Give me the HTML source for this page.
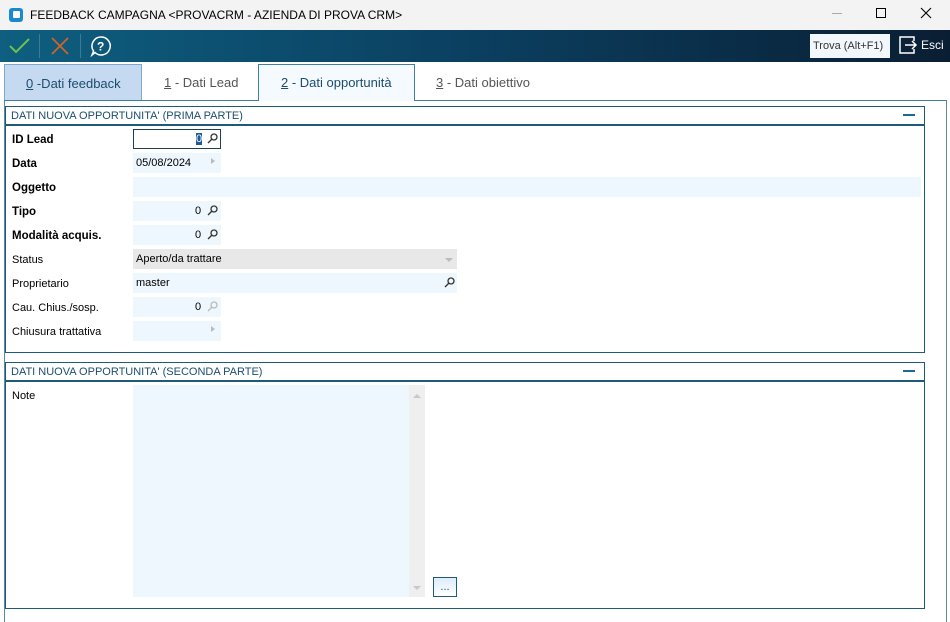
<!DOCTYPE html>
<html><head><meta charset="utf-8"><style>
*{margin:0;padding:0;box-sizing:border-box}
body{width:950px;height:622px;background:#fff;font-family:"Liberation Sans",sans-serif;font-size:12px;color:#000;position:relative;overflow:hidden}
.a{position:absolute}
.inp{position:absolute;background:#eef7fd;height:20px}
.lbl{position:absolute;left:12px;font-size:11px}
.b{font-weight:bold}
.num{position:absolute;font-size:11px}
</style></head><body>
<div class="a" style="left:0;top:0;width:950px;height:30px;background:#f3f3f3"></div>
<div class="a" style="left:9px;top:8px;width:14px;height:14px;background:#1a8ad0;border-radius:3px"></div>
<div class="a" style="left:13px;top:11px;width:7px;height:7px;background:#fff;border-radius:1px"></div>
<div class="a" style="left:30px;top:8px;font-size:12px">FEEDBACK CAMPAGNA &lt;PROVACRM - AZIENDA DI PROVA CRM&gt;</div>
<div class="a" style="left:832px;top:13px;width:10px;height:1px;background:#aaa"></div>
<div class="a" style="left:876px;top:8px;width:10px;height:10px;border:1px solid #000"></div>
<svg class="a" style="left:920px;top:7px" width="12" height="12"><path d="M1 1L11 11M11 1L1 11" stroke="#000" stroke-width="1.1"/></svg>
<div class="a" style="left:0;top:30px;width:950px;height:32px;background:linear-gradient(90deg,#0e5f80,#0b3f60 50%,#0a1e33)"></div>
<svg class="a" style="left:8px;top:36px" width="24" height="20"><path d="M2 10L8 16L21 3" stroke="#6cc24a" stroke-width="2" fill="none"/></svg>
<div class="a" style="left:39px;top:34px;width:1px;height:24px;background:#3d7a96"></div>
<svg class="a" style="left:50px;top:36px" width="20" height="20"><path d="M2 2L18 18M18 2L2 18" stroke="#d0622a" stroke-width="1.8"/></svg>
<div class="a" style="left:80px;top:34px;width:1px;height:24px;background:#3d7a96"></div>
<svg class="a" style="left:90px;top:35px" width="22" height="22"><path d="M11 2a9 9 0 1 1-6 15.5L2 20l1.5-4A9 9 0 0 1 11 2z" stroke="#fff" stroke-width="1.5" fill="none"/><text x="7" y="15.5" fill="#fff" font-size="12" font-weight="bold" font-family="Liberation Sans">?</text></svg>
<div class="a" style="left:810px;top:34px;width:80px;height:24px;background:#f2f7fb;font-size:11px;color:#333;padding:6px 0 0 3px">Trova (Alt+F1)</div>
<svg class="a" style="left:898px;top:35px" width="20" height="20"><path d="M7 2H2v16h5M2 2h14v4M16 14v4H2" stroke="#fff" stroke-width="1.5" fill="none"/><path d="M7 10h11M14 6l4 4-4 4" stroke="#fff" stroke-width="1.5" fill="none"/></svg>
<div class="a" style="left:921px;top:38px;color:#fff;font-size:12px">Esci</div>
<div class="a" style="left:4px;top:64px;width:138px;height:36px;background:#c5daf1;border:1px solid #7fa9cc;border-bottom:none;color:#1b4d6e;font-size:13px;padding:11px 0 0 21px"><u>0</u> -Dati feedback</div>
<div class="a" style="left:164px;top:75px;color:#555;font-size:13px"><u>1</u> - Dati Lead</div>
<div class="a" style="left:258px;top:64px;width:157px;height:37px;background:#f5faff;border:1px solid #3f7fa3;border-bottom:none;color:#1b4d6e;font-size:13px;padding:10px 0 0 22px;z-index:2"><u>2</u> - Dati opportunità</div>
<div class="a" style="left:436px;top:75px;color:#555;font-size:13px"><u>3</u> - Dati obiettivo</div>
<div class="a" style="left:4px;top:100px;width:943px;height:522px;border-left:1px solid #5b8aa5;border-right:1px solid #5b8aa5;border-top:1px solid #3f7fa3"></div>
<div class="a" style="left:5px;top:106px;width:920px;height:247px;border:1.5px solid #1f5a78"></div>
<div class="a" style="left:5px;top:124px;width:920px;height:1.5px;background:#1f5a78"></div>
<div class="a" style="left:11px;top:110px;font-size:11px;color:#1b4d6e">DATI NUOVA OPPORTUNITA' (PRIMA PARTE)</div>
<div class="a" style="left:903px;top:114px;width:12px;height:1.5px;background:#1f6a93"></div>

<div class="lbl b" style="top:134px;font-size:11.5px">ID Lead</div>
<div class="a" style="left:133px;top:129px;width:88px;height:20px;border:1.5px solid #1f3f55;background:#fff"></div>
<div class="a" style="left:196px;top:133px;width:6px;height:12px;background:#1f5a9a;color:#fff;font-size:11px;line-height:12px">0</div>
<div class="lbl b" style="top:158px;font-size:11.5px">Data</div>
<div class="inp" style="left:133px;top:153px;width:88px"></div><div class="num" style="left:136px;top:157px">05/08/2024</div>
<div class="lbl b" style="top:182px;font-size:11.5px">Oggetto</div>
<div class="inp" style="left:133px;top:177px;width:788px"></div>
<div class="lbl b" style="top:206px;font-size:11.5px">Tipo</div>
<div class="inp" style="left:133px;top:201px;width:88px"></div><div class="num" style="left:195px;top:205px">0</div>
<div class="lbl b" style="top:230px;font-size:11.5px">Modalità acquis.</div>
<div class="inp" style="left:133px;top:225px;width:88px"></div><div class="num" style="left:195px;top:229px">0</div>
<div class="lbl" style="top:254px">Status</div>
<div class="inp" style="left:133px;top:249px;width:324px;background:#e8e8e8"></div><div class="num" style="left:136px;top:253px">Aperto/da trattare</div>
<div class="a" style="left:445px;top:258px;border:4px solid transparent;border-top:4px solid #bbb"></div>
<div class="lbl" style="top:278px">Proprietario</div>
<div class="inp" style="left:133px;top:273px;width:324px"></div><div class="num" style="left:136px;top:277px">master</div>
<div class="lbl" style="top:302px">Cau. Chius./sosp.</div>
<div class="inp" style="left:133px;top:297px;width:88px"></div><div class="num" style="left:195px;top:301px">0</div>
<div class="lbl" style="top:326px">Chiusura trattativa</div>
<div class="inp" style="left:133px;top:321px;width:88px"></div>
<div class="a" style="left:211px;top:158px;border:3px solid transparent;border-left:4px solid #bbb"></div>
<div class="a" style="left:211px;top:326px;border:3px solid transparent;border-left:4px solid #bbb"></div>
<svg class="a" style="left:0;top:0" width="950" height="622">
<g stroke-width="1.3" fill="none">
<g stroke="#333"><circle cx="214" cy="137" r="3"/><path d="M212 139l-4 4"/><circle cx="214" cy="209" r="3"/><path d="M212 211l-4 4"/><circle cx="214" cy="233" r="3"/><path d="M212 235l-4 4"/><circle cx="451" cy="281" r="3"/><path d="M449 283l-4 4"/></g>
<g stroke="#bbb"><circle cx="214" cy="305" r="3"/><path d="M212 307l-4 4"/></g>
</g></svg>

<div class="a" style="left:5px;top:362px;width:920px;height:247px;border:1.5px solid #1f5a78"></div>
<div class="a" style="left:5px;top:380px;width:920px;height:1.5px;background:#1f5a78"></div>
<div class="a" style="left:11px;top:366px;font-size:11px;color:#1b4d6e">DATI NUOVA OPPORTUNITA' (SECONDA PARTE)</div>
<div class="a" style="left:903px;top:370px;width:12px;height:1.5px;background:#1f6a93"></div>
<div class="lbl" style="top:390px">Note</div>
<div class="inp" style="left:133px;top:385px;width:276px;height:212px"></div>
<div class="a" style="left:409px;top:385px;width:16px;height:212px;background:#efefef"></div>
<div class="a" style="left:413px;top:390px;border:4px solid transparent;border-bottom:4px solid #c4c8d0"></div>
<div class="a" style="left:413px;top:586px;border:4px solid transparent;border-top:4px solid #c4c8d0"></div>
<div class="a" style="left:433px;top:577px;width:24px;height:20px;border:1.5px solid #1f5a78;background:linear-gradient(#dcecfa,#fff);font-size:11px;text-align:center;line-height:18px;color:#1b4d6e">...</div>
</body></html>
